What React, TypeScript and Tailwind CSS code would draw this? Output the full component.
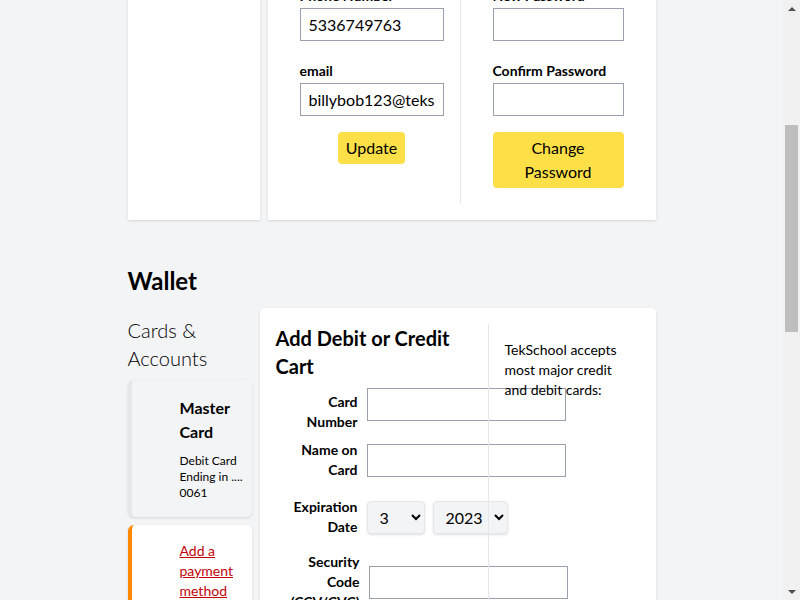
import { useLayoutEffect } from "react";

const font = { fontFamily: 'Lato, "Noto Sans", sans-serif' };

function Field({ label, value, className = "" }: { label: string; value?: string; className?: string }) {
  return (
    <div className={className}>
      <label className="block text-sm font-bold leading-5 text-black">{label}</label>
      <input
        readOnly
        defaultValue={value}
        className="mt-0.5 h-[33px] w-full border border-gray-400 px-2 text-base text-black outline-none"
      />
    </div>
  );
}

function FormRow({
  label,
  labelWidth = "w-[82px]",
  align = "items-center",
  labelClass = "",
  children,
  className = "",
}: {
  label: string;
  labelWidth?: string;
  align?: string;
  labelClass?: string;
  children: React.ReactNode;
  className?: string;
}) {
  return (
    <div className={`flex ${align} ${className}`}>
      <label className={`${labelWidth} ${labelClass} shrink-0 text-right text-sm font-bold leading-5 text-black`}>
        {label}
      </label>
      <div className="ml-[9px] flex shrink-0 gap-2">{children}</div>
    </div>
  );
}

// stand-in for the browser's classic scrollbar seen in the screenshot
function Scrollbar() {
  return (
    <div className="fixed right-0 top-0 flex h-screen w-[17px] flex-col bg-[#f1f1f1]">
      <div className="flex h-[17px] items-center justify-center">
        <div className="h-0 w-0 border-x-[4px] border-b-[4px] border-x-transparent border-b-[#505050]" />
      </div>
      <div className="flex-1 px-[2px]">
        <div className="mt-[108px] h-[207px] bg-[#bebebe]" />
      </div>
      <div className="flex h-[17px] items-center justify-center">
        <div className="h-0 w-0 border-x-[4px] border-t-[4px] border-x-transparent border-t-[#505050]" />
      </div>
    </div>
  );
}

export default function App() {
  // page is viewed scrolled down to the wallet section
  useLayoutEffect(() => {
    window.scrollTo(0, 311);
  }, []);

  return (
    <div style={font} className="flex min-h-[1635px] flex-col bg-gray-100 pr-[17px] text-black">
      {/* Top nav */}
      <nav className="flex h-16 items-center justify-between bg-gray-800 px-8">
        <span className="text-xl font-bold text-white">TEKSchool</span>
        <span className="text-sm text-gray-300">Account</span>
      </nav>

      <main className="mx-auto w-full max-w-xl px-6 pt-8">
        <h1 className="text-3xl font-bold leading-9">Your Account</h1>

        {/* Profile */}
        <section className="mt-[31px]">
          <h2 className="mb-[11px] text-2xl font-bold leading-8">Your Profile</h2>
          <div className="flex gap-2">
            <div className="w-[132px] bg-white p-4 shadow">
              <div className="mx-auto h-16 w-16 rounded-full bg-gray-200" />
            </div>
            <div className="flex flex-1 bg-white p-4 shadow">
              <div className="w-[177px] border-r border-gray-200 px-4 pb-4">
                <Field label="Name" value="Billy Bob" />
                <Field label="Phone Number" value="5336749763" className="mt-5" />
                <Field label="email" value="billybob123@tekschool.us" className="mt-5" />
                <div className="mt-4 text-center">
                  <button className="rounded bg-[#fde047] px-2 py-1 text-base leading-6">Update</button>
                </div>
              </div>
              <div className="flex-1 pb-4 pl-8 pr-4">
                <Field label="Previous Password" />
                <Field label="New Password" className="mt-5" />
                <Field label="Confirm Password" className="mt-5" />
                <button className="mt-4 block w-full rounded bg-[#fde047] px-2 py-1 text-base leading-6">
                  Change Password
                </button>
              </div>
            </div>
          </div>
        </section>

        {/* Wallet */}
        <section className="mt-[45px]">
          <h2 className="mb-[11px] text-2xl font-bold leading-8">Wallet</h2>
          <div className="flex gap-2">
            <div className="w-[124px] shrink-0">
              <p className="pt-[8px] text-xl font-light leading-7">Cards &amp; Accounts</p>
              <div className="mt-[8px] flex flex-col gap-2">
                <div className="rounded-md border-l-4 border-gray-200 bg-gray-100 pb-4 pl-12 pr-2 pt-4 shadow">
                  <p className="text-base font-bold leading-6">Master Card</p>
                  <p className="mt-[9px] text-xs leading-4">Debit Card Ending in .... 0061</p>
                </div>
                <div className="rounded-md border-l-4 border-orange-400 bg-white pb-4 pl-12 pr-2 pt-4 text-sm leading-5 shadow">
                  <a href="#" className="text-red-700 underline">
                    Add a payment method
                  </a>
                </div>
              </div>
            </div>

            <div className="flex flex-1 rounded bg-white p-4 shadow">
              <div className="w-[212px] shrink-0">
                <h3 className="text-xl font-bold leading-7">Add Debit or Credit Cart</h3>
                <FormRow label="Card Number" align="items-start" labelClass="mt-1" className="mt-2">
                  <input className="h-[33px] w-[199px] border border-gray-400 px-2 outline-none" />
                </FormRow>
                <FormRow label="Name on Card" className="mt-2">
                  <input className="h-[33px] w-[199px] border border-gray-400 px-2 outline-none" />
                </FormRow>
                <FormRow label="Expiration Date" className="mt-[17px]">
                  <select
                    defaultValue="3"
                    className="h-[33px] w-[58px] rounded border border-gray-200 bg-gray-100 px-2 text-base shadow-sm"
                  >
                    {Array.from({ length: 12 }, (_, i) => (
                      <option key={i} value={String(i + 1)}>
                        {i + 1}
                      </option>
                    ))}
                  </select>
                  <select
                    defaultValue="2023"
                    className="h-[33px] w-[75px] rounded border border-gray-200 bg-gray-100 px-2 text-base shadow-sm"
                  >
                    {[2023, 2024, 2025, 2026, 2027, 2028].map((y) => (
                      <option key={y} value={String(y)}>
                        {y}
                      </option>
                    ))}
                  </select>
                </FormRow>
                <FormRow label="Security Code (CCV/CVC)" labelWidth="w-[84px]" className="mt-[15px]">
                  <input className="h-[33px] w-[199px] border border-gray-400 px-2 outline-none" />
                </FormRow>
                <div className="mt-4 pl-[91px]">
                  <button className="rounded bg-[#fde047] px-3 py-1 text-base leading-6">Add your card</button>
                </div>
              </div>
              <div className="flex-1 border-l border-gray-200 pl-4 pr-3 pt-4">
                <p className="text-sm leading-5">TekSchool accepts most major credit and debit cards:</p>
              </div>
            </div>
          </div>
        </section>

        {/* Addresses */}
        <section className="mt-[46px]">
          <h2 className="mb-[11px] text-2xl font-bold leading-8">Addresses</h2>
          <div className="rounded bg-white p-4 shadow">
            <button className="rounded bg-[#fde047] px-3 py-1 text-base leading-6">Add Address</button>
          </div>
        </section>
      </main>

      <footer className="mt-auto bg-gray-800 px-8 py-6 text-center text-sm text-gray-300">
        © TEKSchool
      </footer>
      <Scrollbar />
    </div>
  );
}
